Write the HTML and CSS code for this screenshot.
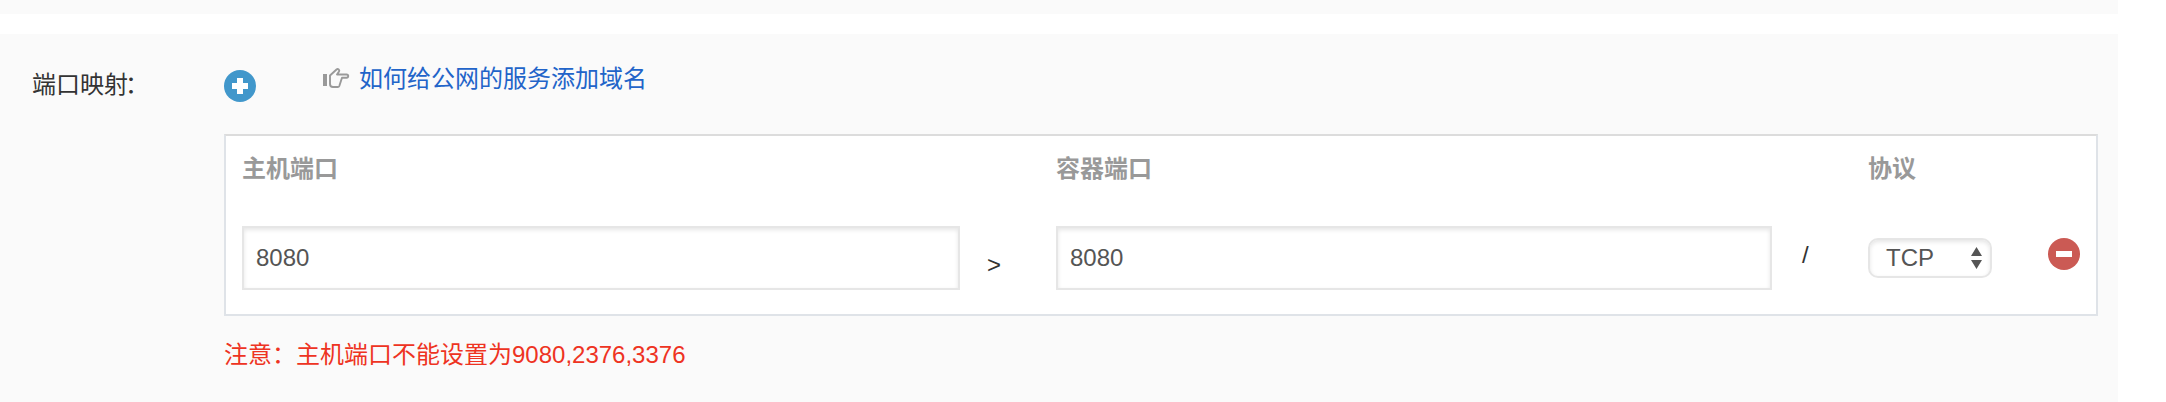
FILE: index.html
```html
<!DOCTYPE html>
<html lang="zh-CN">
<head>
<meta charset="utf-8">
<title>端口映射</title>
<link rel="stylesheet" href="styles.css">
</head>
<body>
<main class="page">
  <section class="previous"></section>
  <section class="ports">
    <div class="label">端口映射<span class="colon">：</span></div>
    <div class="content">
      <div class="toolbar">
        <button class="round" aria-label="添加"><svg width="32" height="32" viewBox="0 0 32 32"><circle cx="16" cy="16" r="16" fill="#4197cb"/><path d="M13 8h6v5h5v6h-5v5h-6v-5H8v-6h5z" fill="#fff"/></svg></button>
        <div class="help">
          <svg class="hand" width="28" height="22" viewBox="0 0 28 22"><path d="M0 7h4v12H0z" fill="#999"/><path d="M7 8.500 13.500 2.500c1.500-1.200 3.500.3 2.500 2L14 7.500h9.500c2.300 0 2.300 3.200 0 3.200H19L16.300 19c-.3.800-.8 1-1.500 1H10c-1.700 0-3-1.300-3-3z" fill="none" stroke="#999" stroke-width="1.900" stroke-linejoin="round"/></svg>
          <a class="link">如何给公网的服务添加域名</a>
        </div>
      </div>
      <div class="panel">
        <div class="head">主机端口</div><div></div><div class="head">容器端口</div><div></div><div class="head">协议</div><div></div>
        <input class="field" value="8080">
        <span class="arrow">&gt;</span>
        <input class="field" value="8080">
        <span class="slash">/</span>
        <div class="select"><span>TCP</span><svg width="12" height="22" viewBox="0 0 12 22"><path d="M0 9 5.500 0 11 9zM0 13h11l-5.500 9z" fill="#555"/></svg></div>
        <button class="round remove" aria-label="删除"><svg width="32" height="32" viewBox="0 0 32 32"><circle cx="16" cy="16" r="16" fill="#cb5a54"/><path d="M8 13h16v6H8z" fill="#fff"/></svg></button>
      </div>
      <div class="note">注意：主机端口不能设置为9080,2376,3376</div>
    </div>
  </section>
</main>
</body>
</html>
```
FILE: styles.css
```css
* { box-sizing: border-box; }
body {
  margin: 0;
  background: #fff;
  color: #333;
  font: 24px/36px "Liberation Sans", "Noto Sans CJK SC", sans-serif;
  overflow: hidden;
}
.page {
  width: 2118px;
  height: 402px;
  display: flex;
  flex-direction: column;
  gap: 20px;
}
.previous { height: 14px; background: #fafafa; }
.ports {
  flex: 1;
  display: flex;
  padding: 32px 20px 0 32px;
  background: #fafafa;
}
.label { width: 192px; padding-top: 1px; }
.colon { margin-left: -3px; }
.content { flex: 1; }
.toolbar { display: flex; height: 68px; }
.round {
  width: 32px;
  height: 32px;
  padding: 0;
  border: 0;
  background: none;
}
.round svg, .hand { display: block; }
.toolbar .round { margin-top: 4px; }
.help { display: flex; margin-left: 67px; }
.hand { margin-top: 1px; }
.link { margin: -5px 0 0 8px; color: #2264c9; }
.panel {
  width: 1874px;
  height: 182px;
  display: grid;
  grid-template-columns: 718px 96px 716px 96px 124px 88px;
  grid-template-rows: 74px 64px;
  padding: 16px 0 0 16px;
  border: 2px solid #dfe3e8;
  border-top-color: #dcdcdc;
  background: #fff;
}
.head { margin-top: -1px; color: #999; font-weight: bold; }
.field {
  height: 64px;
  width: 100%;
  padding: 0 12px;
  border: 2px solid #e6e6e6;
  border-radius: 0;
  background: #fff;
  box-shadow: inset 0 2px 4px rgba(0, 0, 0, .1);
  color: #555;
  font: inherit;
}
.arrow { padding: 21px 0 0 27px; }
.slash { padding: 11px 0 0 30px; }
.select {
  height: 40px;
  margin-top: 12px;
  display: flex;
  justify-content: space-between;
  padding: 0 7px 0 16px;
  border: 2px solid #e6e6e6;
  border-radius: 10px;
  box-shadow: inset 0 2px 4px rgba(0, 0, 0, .1);
  color: #555;
}
.select svg { margin-top: 7px; }
.remove { margin: 12px 0 0 56px; }
.note { margin-top: 21px; color: #ee3322; }
```
